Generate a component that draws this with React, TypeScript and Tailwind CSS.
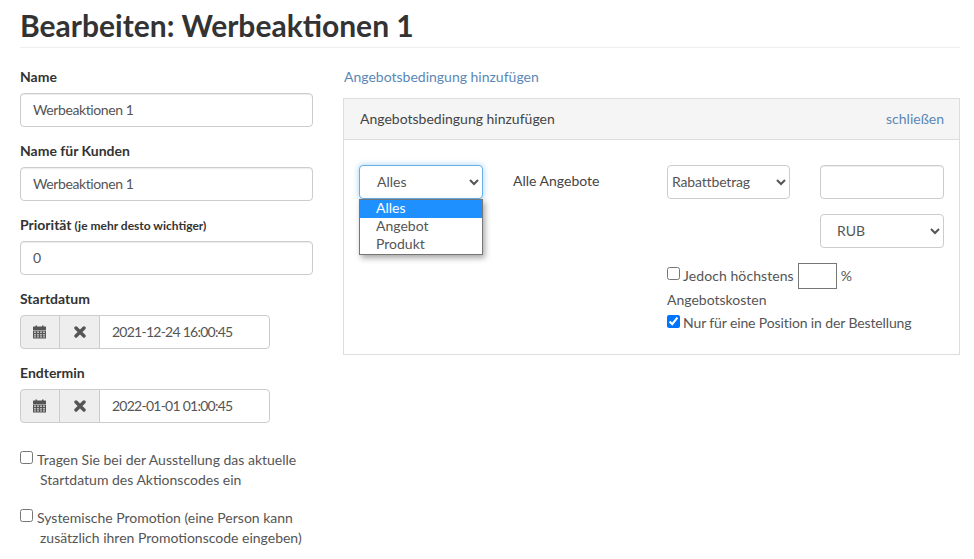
const inputCls =
  'block h-[34px] w-full rounded border border-[#ccc] bg-white px-3 pb-[2px] text-[14px] tracking-[-0.4px] text-[#555] shadow-[inset_0_1px_1px_rgba(0,0,0,0.075)] outline-none'

function CalendarIcon() {
  return (
    <svg width="13" height="14" viewBox="0 0 13 14" fill="#555" className="-ml-px">
      <rect x="2.5" y="0.5" width="1.5" height="2.5" />
      <rect x="9" y="0.5" width="1.5" height="2.5" />
      <rect x="0" y="1.5" width="13" height="3.5" rx="0.5" />
      <path d="M0 5.5h13V13a.5.5 0 0 1-.5.5H.5A.5.5 0 0 1 0 13z" />
      <path d="M1 6.5h2v1.5H1zM4 6.5h2v1.5H4zM7 6.5h2v1.5H7zM10 6.5h2v1.5h-2zM1 9h2v1.5H1zM4 9h2v1.5H4zM7 9h2v1.5H7zM10 9h2v1.5h-2zM1 11.2h2v1.3H1zM4 11.2h2v1.3H4zM7 11.2h2v1.3H7zM10 11.2h2v1.3h-2z" fill="#bbb" />
    </svg>
  )
}

function TimesIcon() {
  return (
    <svg width="12" height="12" viewBox="0 0 12 12" fill="none" stroke="#555" strokeWidth="3.4" strokeLinecap="round">
      <path d="M2 2l8 8M10 2l-8 8" />
    </svg>
  )
}

function Field({ label, hint, value }: { label: string; hint?: string; value: string }) {
  return (
    <div className="mb-[14px]">
      <label className="mb-[6px] block h-5 text-[14px] font-bold leading-5 text-[#333]">
        {label}
        {hint && <span className="text-[12px]"> {hint}</span>}
      </label>
      <input className={inputCls} defaultValue={value} />
    </div>
  )
}

function DateField({ label, value }: { label: string; value: string }) {
  return (
    <div className="mb-[14px]">
      <label className="mb-[6px] block h-5 text-[14px] font-bold leading-5 text-[#333]">{label}</label>
      <div className="flex h-[34px] w-[250px]">
        <span className="flex w-[40px] items-center justify-center rounded-l border border-[#ccc] bg-[#eee]">
          <CalendarIcon />
        </span>
        <span className="-ml-px flex w-[41px] items-center justify-center border border-[#ccc] bg-[#eee]">
          <TimesIcon />
        </span>
        <input
          className="-ml-px min-w-0 flex-1 rounded-r border border-[#ccc] bg-white px-3 pb-[2px] text-[14px] tracking-[-0.75px] text-[#555] outline-none"
          defaultValue={value}
        />
      </div>
    </div>
  )
}

function CheckNote({ children }: { children: string }) {
  return (
    <label className="mb-[18px] block pl-5 -indent-5 text-[14px] leading-5 text-[#555]">
      <input type="checkbox" className="mr-1 inline-block h-[13px] w-[13px] align-[1px]" />
      {children}
    </label>
  )
}

export default function App() {
  return (
    <div className="min-h-[559px] overflow-hidden bg-white pr-[14px] pl-5 font-['Lato','Open_Sans',sans-serif] text-[14px] text-[#555]">
      <h1 className="h-[48px] border-b border-[#eee] pt-[7px] text-[30px] font-bold leading-[36px] text-[#333]">
        Bearbeiten: Werbeaktionen 1
      </h1>

      <div className="flex pt-[19px]">
        {/* Left column */}
        <div className="w-[293px] shrink-0">
          <Field label="Name" value="Werbeaktionen 1" />
          <Field label="Name für Kunden" value="Werbeaktionen 1" />
          <Field label="Priorität" hint="(je mehr desto wichtiger)" value="0" />
          <DateField label="Startdatum" value="2021-12-24 16:00:45" />
          <DateField label="Endtermin" value="2022-01-01 01:00:45" />
          <div className="pt-[13px]">
            <CheckNote>Tragen Sie bei der Ausstellung das aktuelle Startdatum des Aktionscodes ein</CheckNote>
            <CheckNote>Systemische Promotion (eine Person kann zusätzlich ihren Promotionscode eingeben)</CheckNote>
          </div>
        </div>

        {/* Right column */}
        <div className="ml-[30px] min-w-0 flex-1">
          <a className="block h-[20px] pl-px leading-5 text-[#5b87b8]">Angebotsbedingung hinzufügen</a>
          <div className="mt-[11px] h-[257px] border border-[#ddd]">
            <div className="flex h-[41px] items-center justify-between border-b border-[#ddd] bg-[#f5f5f5] pr-[15px] pl-4">
              <span className="pb-[2px] text-[#444]">Angebotsbedingung hinzufügen</span>
              <a className="pb-[2px] text-[#5b87b8]">schließen</a>
            </div>
            <div className="flex pl-[15px] pt-[25px]">
              <div className="relative w-[124px]">
                <select className="h-[34px] w-full rounded border border-[#66afe9] bg-white pb-[2px] pl-[13px] text-[14px] text-[#555] shadow-[0_0_6px_rgba(102,175,233,0.6)] outline-none">
                  <option>Alles</option>
                  <option>Angebot</option>
                  <option>Produkt</option>
                </select>
                {/* Open select list */}
                <ul className="absolute top-[34px] left-0 z-10 w-full border border-[#767676] bg-white text-[14px] text-[#555] shadow-[2px_3px_6px_rgba(0,0,0,0.35)]">
                  <li className="h-[18px] bg-[#1e90ff] pl-4 leading-[16px] text-white">Alles</li>
                  <li className="h-[18px] pl-4 leading-[16px]">Angebot</li>
                  <li className="h-[18px] pl-4 leading-[16px]">Produkt</li>
                </ul>
              </div>
              <div className="ml-[30px] w-[154px] pt-[6px] leading-5 text-[#444]">Alle Angebote</div>
              <div className="w-[277px]">
                <div className="flex justify-between">
                  <select className="h-[34px] w-[123px] rounded border border-[#ccc] bg-white pb-[2px] text-[14px] tracking-[-0.15px] text-[#555] outline-none">
                    <option>Rabattbetrag</option>
                  </select>
                  <input className={`${inputCls} !w-[124px]`} />
                </div>
                <div className="mt-[15px] flex justify-end">
                  <select className="h-[34px] w-[124px] rounded border border-[#ccc] bg-white pb-[2px] pl-[12px] text-[14px] text-[#555] outline-none">
                    <option>RUB</option>
                  </select>
                </div>
                <div className="mt-[15px] flex h-[26px] items-center">
                  <input type="checkbox" className="m-0 mr-[3px] mb-[5px] h-[13px] w-[13px]" />
                  <span className="pb-[2px] tracking-[0.08px]">Jedoch höchstens</span>
                  <input className="mx-1 h-[26px] w-[39px] border border-[#767676] outline-none" />
                  <span className="pb-[2px]">%</span>
                </div>
                <div className="mt-[1px] leading-5 text-[#555]">Angebotskosten</div>
                <label className="mt-[2px] flex h-5 items-center">
                  <input type="checkbox" defaultChecked className="m-0 mr-[3px] mb-[2px] h-[13px] w-[13px]" />
                  <span className="tracking-[-0.12px]">Nur für eine Position in der Bestellung</span>
                </label>
              </div>
            </div>
          </div>
        </div>
      </div>
    </div>
  )
}
